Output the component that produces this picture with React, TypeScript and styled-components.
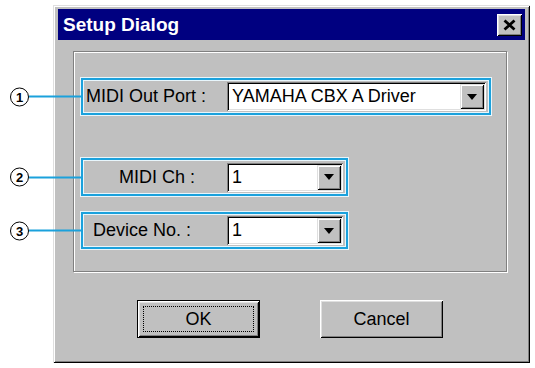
import React from 'react';
import styled, { createGlobalStyle } from 'styled-components';

const GlobalStyle = createGlobalStyle`
  html, body {
    margin: 0;
    padding: 0;
    background: #fff;
  }
  body {
    font-family: "Liberation Sans", Arial, sans-serif;
  }
`;

const Page = styled.div`
  width: 535px;
  height: 368px;
  padding: 5px 0 0 53px;
  box-sizing: border-box;
`;

const Dialog = styled.div`
  width: 477px;
  height: 358px;
  box-sizing: border-box;
  padding: 4px 5px 0 5px;
  display: flex;
  flex-direction: column;
  background: #c0c0c0;
  box-shadow: inset 1px 1px 0 #dfdfdf, inset -1px -1px 0 #000,
    inset 2px 2px 0 #fff, inset -2px -2px 0 #808080;
`;

const TitleBar = styled.div`
  height: 31px;
  display: flex;
  align-items: center;
  justify-content: space-between;
  padding: 0 3px 0 5px;
  background: #000080;
`;

const Title = styled.span`
  color: #fff;
  font-size: 19px;
  font-weight: 700;
`;

const CloseBtn = styled.div`
  width: 25px;
  height: 22px;
  display: flex;
  align-items: center;
  justify-content: center;
  background: #c0c0c0;
  box-shadow: inset 1px 1px 0 #fff, inset -1px -1px 0 #000,
    inset 2px 2px 0 #dfdfdf, inset -2px -2px 0 #808080;
`;

const Body = styled.div`
  flex: 1;
  display: flex;
  flex-direction: column;
  padding: 11px 18px 0 15px;
`;

const GroupBox = styled.div`
  height: 221px;
  box-sizing: border-box;
  padding: 26px 0 0 7px;
  border: 1px solid #808080;
  box-shadow: 1px 1px 0 #fff, inset 1px 1px 0 #fff;
  display: flex;
  flex-direction: column;
  align-items: flex-start;
`;

const Highlight = styled.div<{ w: number; h: number; gap: number }>`
  position: relative;
  width: ${(p) => p.w}px;
  height: ${(p) => p.h}px;
  margin-bottom: ${(p) => p.gap}px;
  box-sizing: border-box;
  display: flex;
  align-items: center;
  padding: 0 3px 0 3px;
  border: 2px solid #1ba1dc;
  box-shadow: inset 0 0 0 1px #e8f6fc, 0 0 0 1px #e8f6fc;
`;

const Callout = styled.div`
  position: absolute;
  left: -73px;
  top: 50%;
  transform: translateY(-50%);
  display: flex;
  align-items: center;
`;

const Badge = styled.div`
  width: 17px;
  height: 17px;
  border: 1px solid #000;
  border-radius: 50%;
  background: #fff;
  display: flex;
  align-items: center;
  justify-content: center;
  font-size: 13px;
  font-weight: 700;
  color: #000;
`;

const Leader = styled.div`
  width: 54px;
  height: 2px;
  background: #1ba1dc;
`;

const Label = styled.div<{ indent: number }>`
  width: 141px;
  flex-shrink: 0;
  box-sizing: border-box;
  padding-left: ${(p) => p.indent}px;
  font-size: 18px;
  color: #000;
  white-space: nowrap;
`;

const Combo = styled.div`
  flex: 1;
  height: 29px;
  box-sizing: border-box;
  padding: 2px;
  display: flex;
  align-items: stretch;
  background: #fff;
  box-shadow: inset 1px 1px 0 #808080, inset -1px -1px 0 #fff,
    inset 2px 2px 0 #000, inset -2px -2px 0 #dfdfdf;
`;

const ComboText = styled.div`
  flex: 1;
  display: flex;
  align-items: center;
  padding-left: 3px;
  font-size: 18px;
  color: #000;
`;

const DropBtn = styled.div`
  width: 24px;
  display: flex;
  align-items: center;
  justify-content: center;
  background: #c0c0c0;
  box-shadow: inset 1px 1px 0 #dfdfdf, inset -1px -1px 0 #000,
    inset 2px 2px 0 #fff, inset -2px -2px 0 #808080;
`;

const Buttons = styled.div`
  display: flex;
  justify-content: center;
  gap: 60px;
  margin-top: 28px;
`;

const Button = styled.div<{ primary?: boolean }>`
  width: 123px;
  height: 38px;
  box-sizing: border-box;
  display: flex;
  align-items: center;
  justify-content: center;
  font-size: 18px;
  color: #000;
  background: #c0c0c0;
  border: ${(p) => (p.primary ? '1px solid #000' : 'none')};
  box-shadow: inset 1px 1px 0 #fff, inset -1px -1px 0 #000,
    inset 2px 2px 0 #dfdfdf, inset -2px -2px 0 #808080;
`;

const Focus = styled.div`
  width: calc(100% - 10px);
  height: calc(100% - 10px);
  box-sizing: border-box;
  border: 1px dotted #000;
  display: flex;
  align-items: center;
  justify-content: center;
`;

function Arrow() {
  return (
    <svg width="10" height="6" viewBox="0 0 10 6">
      <path d="M0 0h10L5 6z" fill="#000" />
    </svg>
  );
}

function CloseIcon() {
  return (
    <svg width="13" height="12" viewBox="0 0 13 12">
      <path d="M1.5 1.5l10 9M11.5 1.5l-10 9" stroke="#000" strokeWidth="2.8" />
    </svg>
  );
}

type RowProps = {
  n: number;
  label: string;
  value: string;
  w: number;
  h: number;
  gap: number;
  indent: number;
};

function Row({ n, label, value, w, h, gap, indent }: RowProps) {
  return (
    <Highlight w={w} h={h} gap={gap}>
      <Callout>
        <Badge>{n}</Badge>
        <Leader />
      </Callout>
      <Label indent={indent}>{label}</Label>
      <Combo>
        <ComboText>{value}</ComboText>
        <DropBtn>
          <Arrow />
        </DropBtn>
      </Combo>
    </Highlight>
  );
}

export default function App() {
  return (
    <>
      <GlobalStyle />
      <Page>
        <Dialog>
          <TitleBar>
            <Title>Setup Dialog</Title>
            <CloseBtn>
              <CloseIcon />
            </CloseBtn>
          </TitleBar>
          <Body>
            <GroupBox>
              <Row n={1} label="MIDI Out Port :" value="YAMAHA CBX A Driver" w={410} h={37} gap={43} indent={0} />
              <Row n={2} label="MIDI Ch :" value="1" w={267} h={38} gap={16} indent={33} />
              <Row n={3} label="Device No. :" value="1" w={267} h={37} gap={0} indent={7} />
            </GroupBox>
            <Buttons>
              <Button primary>
                <Focus>OK</Focus>
              </Button>
              <Button>Cancel</Button>
            </Buttons>
          </Body>
        </Dialog>
      </Page>
    </>
  );
}
